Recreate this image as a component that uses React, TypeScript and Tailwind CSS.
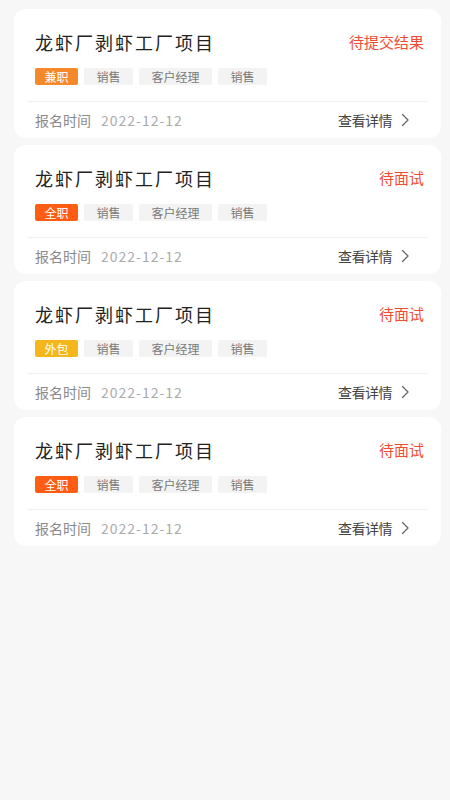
const font = { fontFamily: '"Noto Sans CJK SC", "Noto Sans", sans-serif' };

type Item = {
  title: string;
  status: string;
  kind: string;
  kindColor: string;
  tags: string[];
  date: string;
};

const items: Item[] = [
  { title: "龙虾厂剥虾工厂项目", status: "待提交结果", kind: "兼职", kindColor: "bg-[#f5892a]", tags: ["销售", "客户经理", "销售"], date: "2022-12-12" },
  { title: "龙虾厂剥虾工厂项目", status: "待面试", kind: "全职", kindColor: "bg-[#ff5c14]", tags: ["销售", "客户经理", "销售"], date: "2022-12-12" },
  { title: "龙虾厂剥虾工厂项目", status: "待面试", kind: "外包", kindColor: "bg-[#f4b71b]", tags: ["销售", "客户经理", "销售"], date: "2022-12-12" },
  { title: "龙虾厂剥虾工厂项目", status: "待面试", kind: "全职", kindColor: "bg-[#ff5c14]", tags: ["销售", "客户经理", "销售"], date: "2022-12-12" },
];

function Chevron() {
  return (
    <svg width="10" height="14" viewBox="0 0 10 14" fill="none">
      <path d="M2.5 1.5L8 7L2.5 12.5" stroke="#666" strokeWidth="1.3" strokeLinecap="round" strokeLinejoin="round" />
    </svg>
  );
}

function Card({ item }: { item: Item }) {
  return (
    <div className="rounded-[12px] bg-white px-[13px] pt-[20px]">
      <div className="pl-[8px] pr-[4px]">
        <div className="flex h-[26px] items-center justify-between">
          <span className="text-[18px] leading-[26px] tracking-[2px] text-[#222]">{item.title}</span>
          <span className="text-[15px] leading-[26px] text-[#f24b34]">{item.status}</span>
        </div>
        <div className="mt-[13px] flex h-[17px] gap-[6px]">
          <span className={`${item.kindColor} flex items-center rounded-[2px] px-[9.5px] text-[12px] leading-none text-white`}>
            {item.kind}
          </span>
          {item.tags.map((t, i) => (
            <span key={i} className="flex items-center rounded-[2px] bg-[#f3f3f3] px-[12.5px] text-[12px] leading-none text-[#7a7a7a]">
              {t}
            </span>
          ))}
        </div>
      </div>
      <div className="mt-[16px] h-px bg-[#f1f1f1]" />
      <div className="flex h-[36px] items-center justify-between pl-[8px] pr-[18px]">
        <div className="flex items-center text-[14px]">
          <span className="text-[#8a8a8a]">报名时间</span>
          <span className="ml-[10px] tracking-[1px] text-[#ababab]">{item.date}</span>
        </div>
        <div className="flex items-center gap-[8px] text-[14px] text-[#444]">
          <span className="tracking-[-0.5px]">查看详情</span>
          <Chevron />
        </div>
      </div>
    </div>
  );
}

export default function App() {
  return (
    <div className="min-h-screen bg-[#f7f7f7] pl-[14px] pr-[9px] pt-[9px]" style={font}>
      <div className="flex flex-col gap-[7px]">
        {items.map((item, i) => (
          <Card key={i} item={item} />
        ))}
      </div>
    </div>
  );
}
